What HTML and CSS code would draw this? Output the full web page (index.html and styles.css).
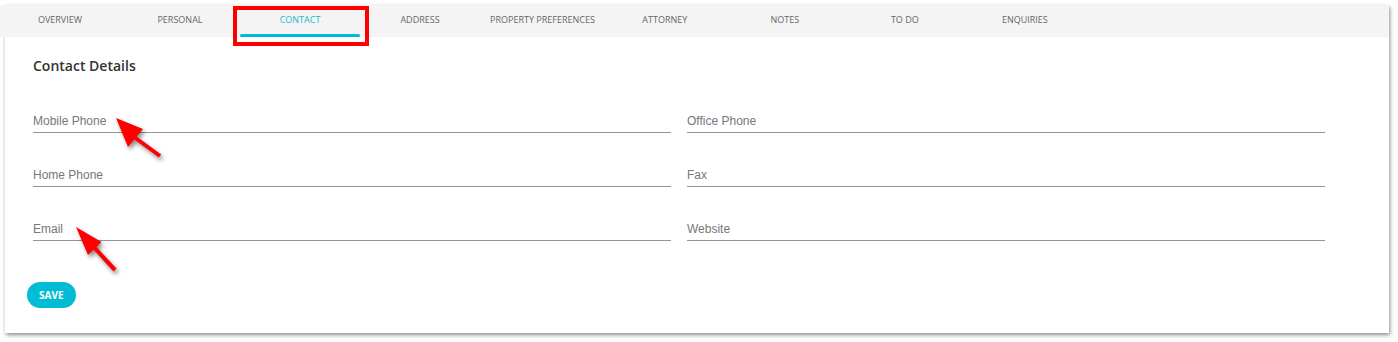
FILE: index.html
```html
<!DOCTYPE html>
<html lang="en">
<head>
    <meta charset="UTF-8">
    <meta name="viewport" content="width=device-width, initial-scale=1.0">
    <title>Contact Details</title>
    <link rel="stylesheet" href="styles.css">
</head>
<body>
<section class="card">
    <nav class="tabs">
        <a class="tab" href="#">OVERVIEW</a>
        <a class="tab" href="#">PERSONAL</a>
        <a class="tab active" href="#">CONTACT</a>
        <a class="tab" href="#">ADDRESS</a>
        <a class="tab" href="#">PROPERTY PREFERENCES</a>
        <a class="tab" href="#">ATTORNEY</a>
        <a class="tab" href="#">NOTES</a>
        <a class="tab" href="#">TO DO</a>
        <a class="tab" href="#">ENQUIRIES</a>
    </nav>

    <div class="content">
        <h2 class="title">Contact Details</h2>
        <form class="fields">
            <label class="field"><span>Mobile Phone</span></label>
            <label class="field"><span>Office Phone</span></label>
            <label class="field"><span>Home Phone</span></label>
            <label class="field"><span>Fax</span></label>
            <label class="field"><span>Email</span></label>
            <label class="field"><span>Website</span></label>
        </form>
        <button class="save" type="button">SAVE</button>
    </div>
</section>

<!-- annotations drawn over the screenshot -->
<div class="highlight"></div>
<svg class="arrows" width="1398" height="342" viewBox="0 0 1398 342">
    <polygon points="116,118 143,129 136.7,136.4 161.2,154.4 158.8,157.6 134.3,139.6 128,147" />
    <polygon points="76,227 101.5,242 96.5,247 116.5,268.6 113.5,271.4 93.5,249.7 88,255" />
</svg>
</body>
</html>
```

FILE: styles.css
```css
body{
    margin: 0;
    background: #fff;
    font-family: "Open Sans", sans-serif;
    position: relative;
    height: 342px;
    overflow: hidden;
}
.card{
    margin: 5px 0 0 5px;
    width: 1384px;
    height: 328px;
    background: #fff;
    box-shadow: 1px 2px 4px rgba(0, 0, 0, 0.45);
}
.tabs{
    display: flex;
    height: 32px;
    margin-left: -5px;
    padding-left: 5px;
    background: #f4f4f4;
}
.tabs .tab:first-child{
    margin-left: -5px;
}
.tab{
    position: relative;
    box-sizing: border-box;
    min-width: 120px;
    padding: 8px 10px 0;
    font-size: 9px;
    line-height: 13px;
    text-align: center;
    color: #666;
    text-decoration: none;
}
.tab.active{
    color: #19b9d0;
}
.tab.active::after{
    content: "";
    position: absolute;
    left: 0;
    right: 0;
    bottom: 0;
    height: 3px;
    border-radius: 2px;
    background: #00bcd4;
}
.content{
    padding: 19px 22px 25px;
}
.title{
    margin: 0 0 0 6px;
    font-size: 14px;
    font-weight: 600;
    line-height: 20px;
    color: #333;
}
.fields{
    display: grid;
    grid-template-columns: 638px 638px;
    column-gap: 16px;
    row-gap: 35px;
    margin: 38px 0 0 6px;
}
.field{
    display: block;
    padding-bottom: 4px;
    border-bottom: 1px solid #949494;
    font-family: "Liberation Sans", Arial, sans-serif;
    font-size: 12px;
    line-height: 14px;
    color: #777;
}
.save{
    margin-top: 41px;
    height: 26px;
    padding: 0 12px;
    border: none;
    border-radius: 13px;
    background: #00bcd4;
    color: #fff;
    font-family: "Open Sans", sans-serif;
    font-size: 10px;
    font-weight: 700;
    cursor: pointer;
}
.highlight{
    position: absolute;
    left: 233px;
    top: 6px;
    width: 128px;
    height: 32px;
    border: 4px solid #f00;
}
.arrows{
    position: absolute;
    left: 0;
    top: 0;
    fill: #f00;
    filter: drop-shadow(2px 3px 2px rgba(0, 0, 0, 0.45));
}
```
